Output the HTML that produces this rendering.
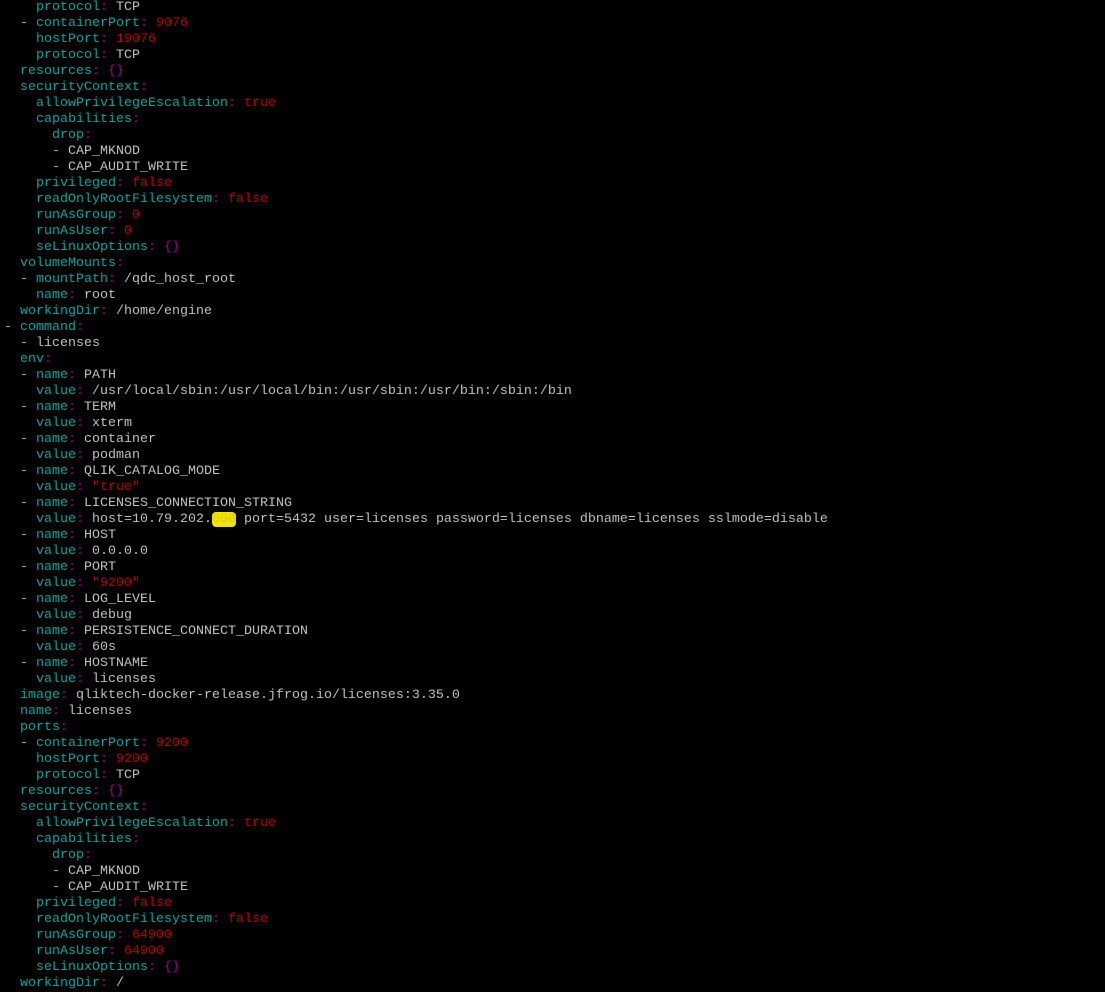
<!DOCTYPE html>
<html><head><style>
html,body{margin:0;padding:0;background:#000;width:1105px;height:989px;overflow:hidden}
pre{position:absolute;left:4px;top:0px;margin:0;font-family:"Liberation Mono",monospace;font-size:13.33px;line-height:16px;color:#c0c0c0}
.k{color:#00a8a8}.c{color:#a000a0}.r{color:#c00000}.d{color:#c0c000}
.h{background:#f2e600;color:#e0c800;border-radius:4px}
</style></head><body><pre>    <span class="k">protocol</span><span class="c">:</span> TCP
  <span class="d">-</span> <span class="k">containerPort</span><span class="c">:</span> <span class="r">9076</span>
    <span class="k">hostPort</span><span class="c">:</span> <span class="r">19076</span>
    <span class="k">protocol</span><span class="c">:</span> TCP
  <span class="k">resources</span><span class="c">: {}</span>
  <span class="k">securityContext</span><span class="c">:</span>
    <span class="k">allowPrivilegeEscalation</span><span class="c">:</span> <span class="r">true</span>
    <span class="k">capabilities</span><span class="c">:</span>
      <span class="k">drop</span><span class="c">:</span>
      <span class="d">-</span> CAP_MKNOD
      <span class="d">-</span> CAP_AUDIT_WRITE
    <span class="k">privileged</span><span class="c">:</span> <span class="r">false</span>
    <span class="k">readOnlyRootFilesystem</span><span class="c">:</span> <span class="r">false</span>
    <span class="k">runAsGroup</span><span class="c">:</span> <span class="r">0</span>
    <span class="k">runAsUser</span><span class="c">:</span> <span class="r">0</span>
    <span class="k">seLinuxOptions</span><span class="c">: {}</span>
  <span class="k">volumeMounts</span><span class="c">:</span>
  <span class="d">-</span> <span class="k">mountPath</span><span class="c">:</span> /qdc_host_root
    <span class="k">name</span><span class="c">:</span> root
  <span class="k">workingDir</span><span class="c">:</span> /home/engine
<span class="d">-</span> <span class="k">command</span><span class="c">:</span>
  <span class="d">-</span> licenses
  <span class="k">env</span><span class="c">:</span>
  <span class="d">-</span> <span class="k">name</span><span class="c">:</span> PATH
    <span class="k">value</span><span class="c">:</span> /usr/local/sbin:/usr/local/bin:/usr/sbin:/usr/bin:/sbin:/bin
  <span class="d">-</span> <span class="k">name</span><span class="c">:</span> TERM
    <span class="k">value</span><span class="c">:</span> xterm
  <span class="d">-</span> <span class="k">name</span><span class="c">:</span> container
    <span class="k">value</span><span class="c">:</span> podman
  <span class="d">-</span> <span class="k">name</span><span class="c">:</span> QLIK_CATALOG_MODE
    <span class="k">value</span><span class="c">:</span> <span class="r">"true"</span>
  <span class="d">-</span> <span class="k">name</span><span class="c">:</span> LICENSES_CONNECTION_STRING
    <span class="k">value</span><span class="c">:</span> host=10.79.202.<span class="h">000</span> port=5432 user=licenses password=licenses dbname=licenses sslmode=disable
  <span class="d">-</span> <span class="k">name</span><span class="c">:</span> HOST
    <span class="k">value</span><span class="c">:</span> 0.0.0.0
  <span class="d">-</span> <span class="k">name</span><span class="c">:</span> PORT
    <span class="k">value</span><span class="c">:</span> <span class="r">"9200"</span>
  <span class="d">-</span> <span class="k">name</span><span class="c">:</span> LOG_LEVEL
    <span class="k">value</span><span class="c">:</span> debug
  <span class="d">-</span> <span class="k">name</span><span class="c">:</span> PERSISTENCE_CONNECT_DURATION
    <span class="k">value</span><span class="c">:</span> 60s
  <span class="d">-</span> <span class="k">name</span><span class="c">:</span> HOSTNAME
    <span class="k">value</span><span class="c">:</span> licenses
  <span class="k">image</span><span class="c">:</span> qliktech-docker-release.jfrog.io/licenses:3.35.0
  <span class="k">name</span><span class="c">:</span> licenses
  <span class="k">ports</span><span class="c">:</span>
  <span class="d">-</span> <span class="k">containerPort</span><span class="c">:</span> <span class="r">9200</span>
    <span class="k">hostPort</span><span class="c">:</span> <span class="r">9200</span>
    <span class="k">protocol</span><span class="c">:</span> TCP
  <span class="k">resources</span><span class="c">: {}</span>
  <span class="k">securityContext</span><span class="c">:</span>
    <span class="k">allowPrivilegeEscalation</span><span class="c">:</span> <span class="r">true</span>
    <span class="k">capabilities</span><span class="c">:</span>
      <span class="k">drop</span><span class="c">:</span>
      <span class="d">-</span> CAP_MKNOD
      <span class="d">-</span> CAP_AUDIT_WRITE
    <span class="k">privileged</span><span class="c">:</span> <span class="r">false</span>
    <span class="k">readOnlyRootFilesystem</span><span class="c">:</span> <span class="r">false</span>
    <span class="k">runAsGroup</span><span class="c">:</span> <span class="r">64900</span>
    <span class="k">runAsUser</span><span class="c">:</span> <span class="r">64900</span>
    <span class="k">seLinuxOptions</span><span class="c">: {}</span>
  <span class="k">workingDir</span><span class="c">:</span> /
</pre></body></html>
